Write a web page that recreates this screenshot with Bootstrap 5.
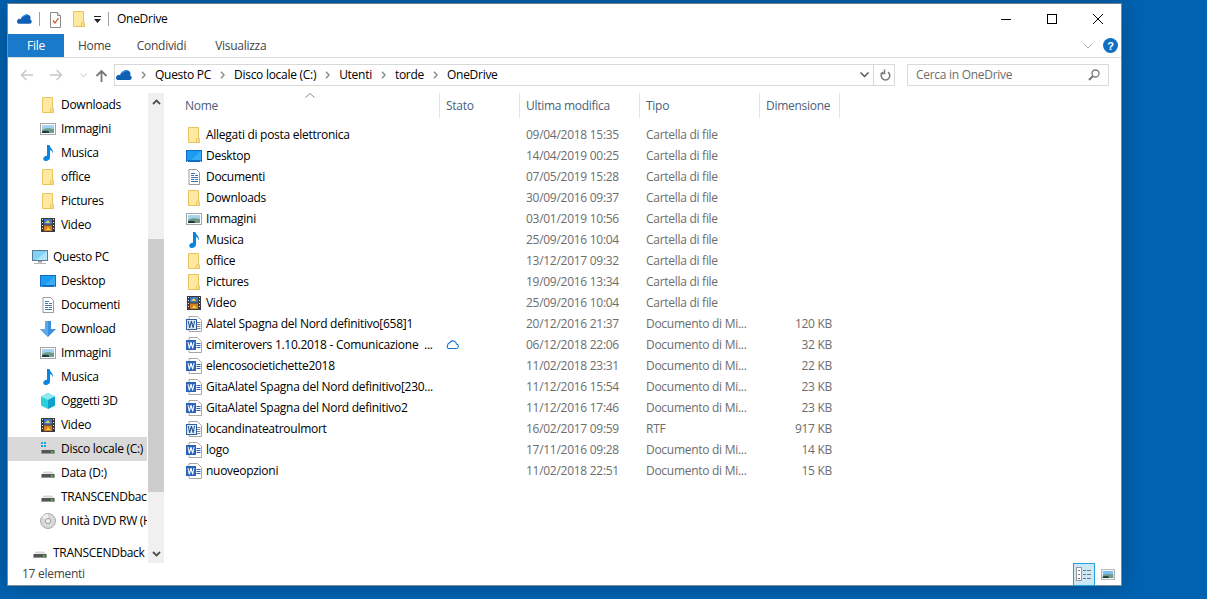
<!DOCTYPE html>
<html lang="it"><head><meta charset="utf-8"><title>OneDrive</title>
<link href="https://cdn.jsdelivr.net/npm/bootstrap@5.3.0/dist/css/bootstrap.min.css" rel="stylesheet">
<style>
html,body{height:100%;overflow:hidden}
body{background:#0063b1;font-family:"Open Sans","Noto Sans",sans-serif;font-size:12px;letter-spacing:-.28px;color:#000;line-height:1}
.win{width:1115px;height:583px;margin:3px 0 0 7px;background:#fff;border:1px solid #7f8c96;border-top-color:#6f7f8c;box-shadow:0 0 22px rgba(0,20,50,.32)}
.ttl{height:31px;padding-left:9px}
.vsep{width:1px;height:14px;background:#a0a0a0}
.m8{margin-left:8px}.m6{margin-left:6px}.m7{margin-left:7px}
.wbtn{width:46px;height:30px}
.tabs{height:23px;border-bottom:1px solid #dadada;box-sizing:content-box}
.wf{width:56px;background:#1979ca;color:#fff;height:23px}
.wt{color:#444;height:23px}
.tb1{margin-left:14px}.tb2{margin-left:26px}.tb3{margin-left:29px}
.hlp{margin-left:10px}
.tabend{width:3px}
.addr{height:35px;padding:6px 12px 0 12px}
.arrows{height:22px;width:94px;flex:none}
.a2{margin-left:17px}.a3{margin-left:17px}.a4{margin-left:8px}
.abox{height:22px;border:1px solid #d9d9d9;color:#000}
.od2{margin-left:1px}
.ch{margin:0 9px;flex:none}
.asep{width:1px;height:100%;background:#d9d9d9;margin:0 3px 0 4px}
.rf{margin:0 3px}
.srch{width:202px;height:22px;border:1px solid #d9d9d9;color:#6d6d6d;margin-left:12px;padding:0 8px 0 8px}
.pane{height:470px}
.navp{width:139px;margin-right:1px;overflow:hidden;flex:none}
.nr{height:24px;white-space:nowrap;padding-left:32px;overflow:hidden}
.nr.pc{padding-left:24px}
.nr.sel{background:#d9d9d9}
.nr svg{margin-right:5px;flex:none}
.ngap{height:8px}
.sb{width:16px;background:#f0f0f0}
.sbb{height:17px;color:#505050}
.thumb{height:253px;background:#cdcdcd;margin-top:129px;margin-bottom:53px}
.listp{min-width:0}
.hd{height:26px;color:#4c607a;position:relative}
.hc{height:25px;border-right:1px solid #e5e5e5;padding-left:6px}
.c0{width:276px;padding-left:21px}.c1{width:80px}.c2{width:120px}.c3{width:120px}.c4{width:80px}
.rows{padding-top:5px}
.fr{height:21px;color:#6d6d6d}
.fn{width:276px;padding-left:22px;color:#000;white-space:nowrap}
.fn svg{margin-right:4px;flex:none}
.fs{width:80px;padding-left:5px}.fd{width:120px;padding-left:6px}.ft{width:120px;padding-left:6px;white-space:nowrap}.fz{width:72px;text-align:right}
.sort{position:absolute;left:141px;top:0}
.stat{height:22px;color:#444;padding-left:14px}
.vb{width:22px;height:23px;background:#cce8f6;border:1px solid #26a0da}
.vb2{width:26px;height:23px}
</style></head><body>
<svg width="0" height="0" class="d-none"><defs>
<symbol id="folder" viewBox="0 0 16 16"><path d="M2.500.5h10v12h1v3h-11z" fill="#ffe8a0" stroke="#e8c45e"/><path d="M13 10.500v5h-2.500v-3.500z" fill="#ffe8a0" stroke="#e8c45e"/></symbol>
<symbol id="pic" viewBox="0 0 16 16"><rect x=".5" y="2.500" width="15" height="11" fill="#fff" stroke="#a5a5a5"/><rect x="2" y="4" width="12" height="8" fill="#a6d3ee"/><path d="M2 9c3-2 6-2 12-1v4H2z" fill="#6f9a86"/><path d="M2 10.500c2-1 5-1 7 0V12H2z" fill="#1d3b36"/></symbol>
<symbol id="music" viewBox="0 0 16 16"><path d="M7 0h2.500c.5 3 4 4 3.500 8.500-.7-2.200-2-3.200-3-3.500v7.500C10 15 7 16.500 4.500 15.700 2.200 14.700 3.200 11.800 5.500 11c.6-.2 1-.2 1.500 0z" fill="#0b84e0"/></symbol>
<symbol id="video" viewBox="0 0 16 16"><rect x="1" y="1" width="14" height="14" fill="#3a3a3a"/><rect x="4" y="2" width="8" height="5.500" fill="#3f77c6"/><rect x="4" y="8.500" width="8" height="5.500" fill="#d87c22"/><path d="M5 6l3-3 2 3zM6 13l2-3 3 3z" fill="#f1d23d"/><path d="M2 2h1v1H2zM2 5h1v1H2zM2 8h1v1H2zM2 11h1v1H2zM13 2h1v1h-1zM13 5h1v1h-1zM13 8h1v1h-1zM13 11h1v1h-1z" fill="#eee"/></symbol>
<symbol id="desk" viewBox="0 0 16 16"><rect y="2" width="16" height="12" fill="#0f6fc6"/><path d="M1 3h14v9H1z" fill="#1b9cf0"/><path d="M15 3v9H5z" fill="#36adf5"/><path d="M1 13h1v1H1zM14 13h1v1h-1z" fill="#cfe8fa"/></symbol>
<symbol id="doc" viewBox="0 0 16 16"><path d="M3 .5h7.500l3 3v12H3z" fill="#fff" stroke="#9a9a9a"/><path d="M5 4.500h4M5 6.500h3M9 6.500h3M5 8.500h7M5 10.500h3M9 10.500h3M5 12.500h7" stroke="#3f76b0"/></symbol>
<symbol id="dl" viewBox="0 0 16 16"><path d="M5 0h6v8h5l-8 8-8-8h5z" fill="#3d8fdc"/><path d="M5 0h3v16L0 8h5z" fill="#5ba8ea"/></symbol>
<symbol id="pc" viewBox="0 0 16 16"><rect y="1" width="16" height="11" fill="#5a7c94"/><rect x="1" y="2" width="14" height="9" fill="#7fd3f7"/><path d="M15 2v9H4z" fill="#aee3fa"/><path d="M6 12h4v1.500H6z" fill="#999"/><path d="M2 14h12v1H2z" fill="#b5b5b5"/></symbol>
<symbol id="o3d" viewBox="0 0 16 16"><path d="M8 0l7 3.500v9L8 16l-7-3.500v-9z" fill="#2bd0dc"/><path d="M8 0l7 3.500L8 7 1 3.500z" fill="#8fe9f0"/><path d="M8 7l7-3.500v9L8 16z" fill="#0fa3c9"/></symbol>
<symbol id="disk" viewBox="0 0 16 16"><path d="M2 8.500l2-2h8l2 2z" fill="#d5d5d5"/><rect x="1.500" y="9" width="13" height="4" fill="#555"/><rect x="2" y="12" width="12" height="1" fill="#999"/><rect x="11" y="10" width="2" height="1.500" fill="#47d24a"/></symbol>
<symbol id="diskc" viewBox="0 0 16 16"><path d="M1 1h2v2H1zM4 1h2v2H4zM1 4h2v2H1zM4 4h2v2H4z" fill="#1aa1e8"/><path d="M4 8.500l2-2h6l2 2z" fill="#d5d5d5"/><rect x="1.500" y="9" width="13" height="4" fill="#555"/><rect x="2" y="12" width="12" height="1" fill="#999"/><rect x="11" y="10" width="2" height="1.500" fill="#47d24a"/></symbol>
<symbol id="dvd" viewBox="0 0 16 16"><circle cx="8" cy="8" r="7.500" fill="#d8d8d8" stroke="#aaa"/><path d="M8 8L2 4a7 7 0 0 1 6-3z" fill="#eee"/><circle cx="8" cy="8" r="2.500" fill="#f4f4f4" stroke="#999"/></symbol>
<symbol id="wd" viewBox="0 0 16 16"><path d="M3 .5h8.500l4 4v11H3z" fill="#fff" stroke="#a8a8a8"/><path d="M10.500 6.500h4M10.500 8.500h4M10.500 10.500h4" stroke="#2b5fb0"/><rect y="3" width="10" height="10" fill="#2b63b8"/><path d="M1.500 5l1.300 6.500h1l1.200-4 1.200 4h1L8.500 5h-1l-.7 4L5.500 5h-1L3.200 9l-.7-4z" fill="#fff"/></symbol>
<symbol id="wo" viewBox="0 0 16 16"><path d="M3 .5h8.500l4 4v11H3z" fill="#fff" stroke="#a8a8a8"/><path d="M10.500 6.500h4M10.500 8.500h4M10.500 10.500h4M10.500 12.500h4" stroke="#8a8a8a"/><rect x=".5" y="3.500" width="10" height="10" fill="#dfe6f2" stroke="#2b5fa0"/><path d="M1.800 5l1.400 7h.9l1.300-4.800L6.700 12h.9L9 5H8l-.8 4.800L5.900 5h-1L3.600 9.800 2.800 5z" fill="#1f4e8c"/></symbol>
<symbol id="cl" viewBox="0 0 16 12"><path d="M3.500 10.500h9a2.500 2.500 0 0 0 .5-5 4 4 0 0 0-7.500-1.500 3.200 3.200 0 0 0-2.500 3 2.500 2.500 0 0 0 .5 3.500z" fill="none" stroke="#0f6fc6" stroke-width="1.200"/></symbol>
<symbol id="od" viewBox="0 0 16 12"><path d="M1.500 11h12a2.300 2.300 0 0 0 .6-4.500A3.800 3.800 0 0 0 7 3.500a2.800 2.800 0 0 0-2.800 2.700A2.500 2.500 0 0 0 1.500 11z" fill="#0f5fb5"/><path d="M4.200 5.500C5 2 9.500.5 11.500 3 9.500 2.500 8 2.800 7 3.800 5.500 3.800 4.600 4.500 4.200 5.500z" fill="#2a8ae0"/></symbol>
<symbol id="chv" viewBox="0 0 5 8"><path d="M1 .8L4 4 1 7.200" fill="none" stroke="#8f8f8f" stroke-width="1.500"/></symbol>
</defs></svg>

<div class="win d-flex flex-column">
 <div class="ttl d-flex align-items-center">
  <svg width="15" height="12"><use href="#od"/></svg>
  <span class="vsep m7"></span>
  <svg class="ms-2" width="15" height="17" viewBox="0 0 15 17"><path d="M2.500 1.500h7l3 3v12h-10z" fill="#fff" stroke="#8a8a8a"/><path d="M9.500 1.500v3h3" fill="#eee" stroke="#8a8a8a"/><path d="M5 9.500l2 2.500 3.500-5" fill="none" stroke="#e2551b" stroke-width="1.300"/></svg>
  <svg class="ms-2" width="16" height="16"><use href="#folder"/></svg>
  <svg class="m6" width="9" height="9" viewBox="0 0 9 9"><path d="M1 1.500h7" stroke="#222"/><path d="M1 4h7L4.500 8z" fill="#222"/></svg>
  <span class="vsep m6"></span>
  <span class="m8">OneDrive</span>
  <div class="ms-auto d-flex">
   <div class="wbtn d-flex align-items-center justify-content-center"><svg width="10" height="10"><path d="M0 5.500h10" stroke="#000"/></svg></div>
   <div class="wbtn d-flex align-items-center justify-content-center"><svg width="10" height="10"><rect x=".5" y=".5" width="9" height="9" fill="none" stroke="#000"/></svg></div>
   <div class="wbtn d-flex align-items-center justify-content-center"><svg width="10" height="10"><path d="M0 0l10 10M10 0L0 10" stroke="#000"/></svg></div>
  </div>
 </div>
 <div class="tabs d-flex align-items-center">
  <div class="wf d-flex align-items-center justify-content-center">File</div>
  <div class="wt d-flex align-items-center tb1">Home</div>
  <div class="wt d-flex align-items-center tb2">Condividi</div>
  <div class="wt d-flex align-items-center tb3">Visualizza</div>
  <div class="ms-auto d-flex align-items-center">
   <svg width="10" height="6" viewBox="0 0 10 6"><path d="M.5.500L5 5l4.500-4.500" fill="none" stroke="#aaa"/></svg>
   <svg class="hlp" width="15" height="15" viewBox="0 0 15 15"><circle cx="7.500" cy="7.500" r="7.500" fill="#0f6fc6"/><text x="7.500" y="11.500" text-anchor="middle" font-size="11" font-weight="700" fill="#fff" font-family="Liberation Sans">?</text></svg>
   <span class="tabend"></span>
  </div>
 </div>
 <div class="addr d-flex align-items-start">
  <div class="d-flex align-items-center arrows">
   <svg width="13" height="12" viewBox="0 0 13 12"><path d="M13 6H2M6.500 1L1.500 6l5 5" fill="none" stroke="#c8c8c8" stroke-width="1.500"/></svg>
   <svg class="a2" width="13" height="12" viewBox="0 0 13 12"><path d="M0 6h11M6.500 1l5 5-5 5" fill="none" stroke="#c8c8c8" stroke-width="1.500"/></svg>
   <svg class="a3" width="7" height="5" viewBox="0 0 7 5"><path d="M.5.500L3.500 4l3-3.500" fill="none" stroke="#c8c8c8"/></svg>
   <svg class="a4" width="13" height="13" viewBox="0 0 13 13"><path d="M6.500 13V2M1.500 7l5-5 5 5" fill="none" stroke="#777" stroke-width="1.800"/></svg>
  </div>
  <div class="abox d-flex align-items-center flex-grow-1">
   <svg class="od2" width="16" height="12"><use href="#od"/></svg>
   <svg class="ch" width="5" height="8"><use href="#chv"/></svg><span>Questo PC</span><svg class="ch" width="5" height="8"><use href="#chv"/></svg><span>Disco locale (C:)</span><svg class="ch" width="5" height="8"><use href="#chv"/></svg><span>Utenti</span><svg class="ch" width="5" height="8"><use href="#chv"/></svg><span>torde</span><svg class="ch" width="5" height="8"><use href="#chv"/></svg><span>OneDrive</span>
   <div class="ms-auto d-flex align-items-center h-100">
    <svg width="9" height="6" viewBox="0 0 9 6"><path d="M.5.500L4.500 4.500l4-4" fill="none" stroke="#555" stroke-width="1.500"/></svg>
    <span class="asep"></span>
    <svg class="rf" width="11" height="12" viewBox="0 0 11 12"><path d="M3 3.200a4.300 4.300 0 1 0 5 0M4.500 .500v4h-4" fill="none" stroke="#777" stroke-width="1.500"/></svg>
   </div>
  </div>
  <div class="srch d-flex align-items-center">Cerca in OneDrive
   <svg class="ms-auto" width="12" height="12" viewBox="0 0 12 12"><circle cx="7.500" cy="4.500" r="3.500" fill="none" stroke="#777" stroke-width="1.300"/><path d="M5 7l-4 4" stroke="#777" stroke-width="2"/></svg>
  </div>
 </div>
 <div class="pane d-flex">
  <div class="navp">
   <div class="nr d-flex align-items-center"><svg width="16" height="16"><use href="#folder"/></svg>Downloads</div>
   <div class="nr d-flex align-items-center"><svg width="16" height="16"><use href="#pic"/></svg>Immagini</div>
   <div class="nr d-flex align-items-center"><svg width="16" height="16"><use href="#music"/></svg>Musica</div>
   <div class="nr d-flex align-items-center"><svg width="16" height="16"><use href="#folder"/></svg>office</div>
   <div class="nr d-flex align-items-center"><svg width="16" height="16"><use href="#folder"/></svg>Pictures</div>
   <div class="nr d-flex align-items-center"><svg width="16" height="16"><use href="#video"/></svg>Video</div>
   <div class="ngap"></div>
   <div class="nr pc d-flex align-items-center"><svg width="16" height="16"><use href="#pc"/></svg>Questo PC</div>
   <div class="nr d-flex align-items-center"><svg width="16" height="16"><use href="#desk"/></svg>Desktop</div>
   <div class="nr d-flex align-items-center"><svg width="16" height="16"><use href="#doc"/></svg>Documenti</div>
   <div class="nr d-flex align-items-center"><svg width="16" height="16"><use href="#dl"/></svg>Download</div>
   <div class="nr d-flex align-items-center"><svg width="16" height="16"><use href="#pic"/></svg>Immagini</div>
   <div class="nr d-flex align-items-center"><svg width="16" height="16"><use href="#music"/></svg>Musica</div>
   <div class="nr d-flex align-items-center"><svg width="16" height="16"><use href="#o3d"/></svg>Oggetti 3D</div>
   <div class="nr d-flex align-items-center"><svg width="16" height="16"><use href="#video"/></svg>Video</div>
   <div class="nr sel d-flex align-items-center"><svg width="16" height="16"><use href="#diskc"/></svg>Disco locale (C:)</div>
   <div class="nr d-flex align-items-center"><svg width="16" height="16"><use href="#disk"/></svg>Data (D:)</div>
   <div class="nr d-flex align-items-center"><svg width="16" height="16"><use href="#disk"/></svg>TRANSCENDback</div>
   <div class="nr d-flex align-items-center"><svg width="16" height="16"><use href="#dvd"/></svg>Unità DVD RW (H</div>
   <div class="ngap"></div>
   <div class="nr pc d-flex align-items-center"><svg width="16" height="16"><use href="#disk"/></svg>TRANSCENDback</div>
  </div>
  <div class="sb d-flex flex-column">
   <div class="sbb d-flex align-items-center justify-content-center"><svg width="9" height="6" viewBox="0 0 9 6"><path d="M1 5l3.500-3.500L8 5" fill="none" stroke="#505050" stroke-width="1.800"/></svg></div>
   <div class="thumb"></div>
   <div class="sbb d-flex align-items-center justify-content-center"><svg width="9" height="6" viewBox="0 0 9 6"><path d="M1 1l3.500 3.500L8 1" fill="none" stroke="#505050" stroke-width="1.800"/></svg></div>
  </div>
  <div class="listp flex-grow-1">
   <div class="hd d-flex align-items-start">
    <svg class="sort" width="10" height="5" viewBox="0 0 10 5"><path d="M.5 4.500L5 .5l4.500 4" fill="none" stroke="#888"/></svg>
    <div class="hc c0 d-flex align-items-center">Nome</div><div class="hc c1 d-flex align-items-center">Stato</div><div class="hc c2 d-flex align-items-center">Ultima modifica</div><div class="hc c3 d-flex align-items-center">Tipo</div><div class="hc c4 d-flex align-items-center">Dimensione</div>
   </div>
   <div class="rows">
    <div class="fr d-flex align-items-center"><div class="fn d-flex align-items-center"><svg width="16" height="16"><use href="#folder"/></svg>Allegati di posta elettronica</div><div class="fs"></div><div class="fd">09/04/2018 15:35</div><div class="ft">Cartella di file</div></div>
    <div class="fr d-flex align-items-center"><div class="fn d-flex align-items-center"><svg width="16" height="16"><use href="#desk"/></svg>Desktop</div><div class="fs"></div><div class="fd">14/04/2019 00:25</div><div class="ft">Cartella di file</div></div>
    <div class="fr d-flex align-items-center"><div class="fn d-flex align-items-center"><svg width="16" height="16"><use href="#doc"/></svg>Documenti</div><div class="fs"></div><div class="fd">07/05/2019 15:28</div><div class="ft">Cartella di file</div></div>
    <div class="fr d-flex align-items-center"><div class="fn d-flex align-items-center"><svg width="16" height="16"><use href="#folder"/></svg>Downloads</div><div class="fs"></div><div class="fd">30/09/2016 09:37</div><div class="ft">Cartella di file</div></div>
    <div class="fr d-flex align-items-center"><div class="fn d-flex align-items-center"><svg width="16" height="16"><use href="#pic"/></svg>Immagini</div><div class="fs"></div><div class="fd">03/01/2019 10:56</div><div class="ft">Cartella di file</div></div>
    <div class="fr d-flex align-items-center"><div class="fn d-flex align-items-center"><svg width="16" height="16"><use href="#music"/></svg>Musica</div><div class="fs"></div><div class="fd">25/09/2016 10:04</div><div class="ft">Cartella di file</div></div>
    <div class="fr d-flex align-items-center"><div class="fn d-flex align-items-center"><svg width="16" height="16"><use href="#folder"/></svg>office</div><div class="fs"></div><div class="fd">13/12/2017 09:32</div><div class="ft">Cartella di file</div></div>
    <div class="fr d-flex align-items-center"><div class="fn d-flex align-items-center"><svg width="16" height="16"><use href="#folder"/></svg>Pictures</div><div class="fs"></div><div class="fd">19/09/2016 13:34</div><div class="ft">Cartella di file</div></div>
    <div class="fr d-flex align-items-center"><div class="fn d-flex align-items-center"><svg width="16" height="16"><use href="#video"/></svg>Video</div><div class="fs"></div><div class="fd">25/09/2016 10:04</div><div class="ft">Cartella di file</div></div>
    <div class="fr d-flex align-items-center"><div class="fn d-flex align-items-center"><svg width="16" height="16"><use href="#wo"/></svg>Alatel Spagna del Nord definitivo[658]1</div><div class="fs"></div><div class="fd">20/12/2016 21:37</div><div class="ft">Documento di Mi...</div><div class="fz">120 KB</div></div>
    <div class="fr d-flex align-items-center"><div class="fn d-flex align-items-center"><svg width="16" height="16"><use href="#wd"/></svg>cimiterovers 1.10.2018 - Comunicazione &nbsp;...</div><div class="fs d-flex align-items-center"><svg width="14" height="11"><use href="#cl"/></svg></div><div class="fd">06/12/2018 22:06</div><div class="ft">Documento di Mi...</div><div class="fz">32 KB</div></div>
    <div class="fr d-flex align-items-center"><div class="fn d-flex align-items-center"><svg width="16" height="16"><use href="#wd"/></svg>elencosocietichette2018</div><div class="fs"></div><div class="fd">11/02/2018 23:31</div><div class="ft">Documento di Mi...</div><div class="fz">22 KB</div></div>
    <div class="fr d-flex align-items-center"><div class="fn d-flex align-items-center"><svg width="16" height="16"><use href="#wd"/></svg>GitaAlatel Spagna del Nord definitivo[230...</div><div class="fs"></div><div class="fd">11/12/2016 15:54</div><div class="ft">Documento di Mi...</div><div class="fz">23 KB</div></div>
    <div class="fr d-flex align-items-center"><div class="fn d-flex align-items-center"><svg width="16" height="16"><use href="#wd"/></svg>GitaAlatel Spagna del Nord definitivo2</div><div class="fs"></div><div class="fd">11/12/2016 17:46</div><div class="ft">Documento di Mi...</div><div class="fz">23 KB</div></div>
    <div class="fr d-flex align-items-center"><div class="fn d-flex align-items-center"><svg width="16" height="16"><use href="#wo"/></svg>locandinateatroulmort</div><div class="fs"></div><div class="fd">16/02/2017 09:59</div><div class="ft">RTF</div><div class="fz">917 KB</div></div>
    <div class="fr d-flex align-items-center"><div class="fn d-flex align-items-center"><svg width="16" height="16"><use href="#wd"/></svg>logo</div><div class="fs"></div><div class="fd">17/11/2016 09:28</div><div class="ft">Documento di Mi...</div><div class="fz">14 KB</div></div>
    <div class="fr d-flex align-items-center"><div class="fn d-flex align-items-center"><svg width="16" height="16"><use href="#wd"/></svg>nuoveopzioni</div><div class="fs"></div><div class="fd">11/02/2018 22:51</div><div class="ft">Documento di Mi...</div><div class="fz">15 KB</div></div>
   </div>
  </div>
 </div>
 <div class="stat d-flex align-items-center">17 elementi
  <div class="ms-auto d-flex align-items-center">
   <div class="vb d-flex align-items-center justify-content-center"><svg width="16" height="14" viewBox="0 0 16 14"><rect x=".5" y=".5" width="5" height="13" fill="#fff" stroke="#999"/><path d="M2 3.500h2M2 7.500h2M2 11.500h2" stroke="#777"/><path d="M7 3.500h3M11 3.500h4M7 7.500h3M11 7.500h4M7 11.500h3M11 11.500h4" stroke="#777"/></svg></div>
   <div class="vb2 d-flex align-items-center justify-content-center"><svg width="14" height="11" viewBox="0 2 16 12"><rect x=".5" y="2.500" width="15" height="11" fill="#fff" stroke="#a5a5a5"/><rect x="2" y="4" width="12" height="8" fill="#7fbdf0"/><path d="M2 9c3-2 6-2 12-1v4H2z" fill="#6f9a86"/><path d="M2 10.500c2-1 5-1 7 0V12H2z" fill="#1d3b36"/></svg></div>
  </div>
 </div>
</div>
</body></html>
